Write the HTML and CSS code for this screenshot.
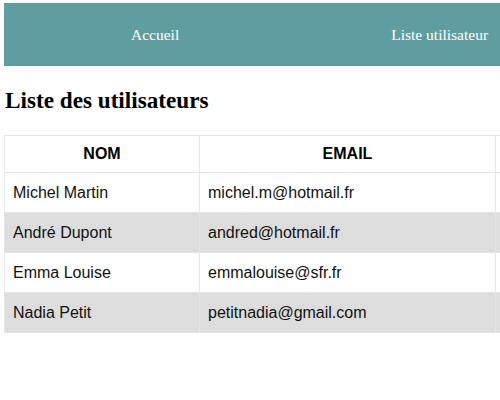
FILE: index.html
```html
<!DOCTYPE html>
<html lang="fr">
<head>
<meta charset="utf-8">
<title>Liste des utilisateurs</title>
<link rel="stylesheet" href="styles.css">
</head>
<body>
<div class="page">
  <nav class="nav">
    <ul class="nav-list">
      <li class="nav-item"><a class="nav-link" href="#">Accueil</a></li>
      <li class="nav-item"><a class="nav-link" href="#">Liste utilisateur</a></li>
    </ul>
  </nav>
  <main class="content">
    <h2 class="title">Liste des utilisateurs</h2>
    <table class="users">
      <thead>
        <tr><th class="col-name">NOM</th><th class="col-email">EMAIL</th><th class="col-extra"></th></tr>
      </thead>
      <tbody>
        <tr><td>Michel Martin</td><td>michel.m@hotmail.fr</td><td></td></tr>
        <tr><td>André Dupont</td><td>andred@hotmail.fr</td><td></td></tr>
        <tr><td>Emma Louise</td><td>emmalouise@sfr.fr</td><td></td></tr>
        <tr><td>Nadia Petit</td><td>petitnadia@gmail.com</td><td></td></tr>
      </tbody>
    </table>
  </main>
</div>
</body>
</html>
```
FILE: styles.css
```css
html, body { overflow: hidden; }
body {
  margin: 0;
  padding: 3px 0 0 4px;
  font-family: "Liberation Serif", serif;
  background: #fff;
}
.page {
  width: 496px;
  overflow: hidden;
}
.nav {
  background: #5f9ea0;
  width: 700px;
  height: 63px;
  display: flex;
  align-items: center;
}
.nav-list {
  list-style: none;
  margin: 0;
  padding: 0 0 0 127px;
  display: flex;
  gap: 212px;
}
.nav-link {
  color: #fff;
  text-decoration: none;
  font-size: 15.5px;
}
.content { padding: 0; }
.title {
  font-family: "Liberation Serif", serif;
  font-size: 23.2px;
  font-weight: bold;
  margin: 21px 0 21px 1px;
  color: #000;
}
.users {
  width: 640px;
  table-layout: fixed;
  border-collapse: collapse;
  font-family: "Liberation Sans", Arial, sans-serif;
  font-size: 16px;
  color: #111;
}
.users th, .users td {
  border: 1px solid #e6e6e6;
}
.users th {
  height: 36px;
  font-weight: bold;
  color: #000;
  text-align: center;
  padding: 0;
}
.col-name { width: 194px; }
.col-email { width: 295px; }
.col-extra { width: 151px; }
.users td {
  height: 39px;
  padding: 0 0 0 8px;
}
.users tbody tr:nth-child(even) td { background: #dddddd; }
```
